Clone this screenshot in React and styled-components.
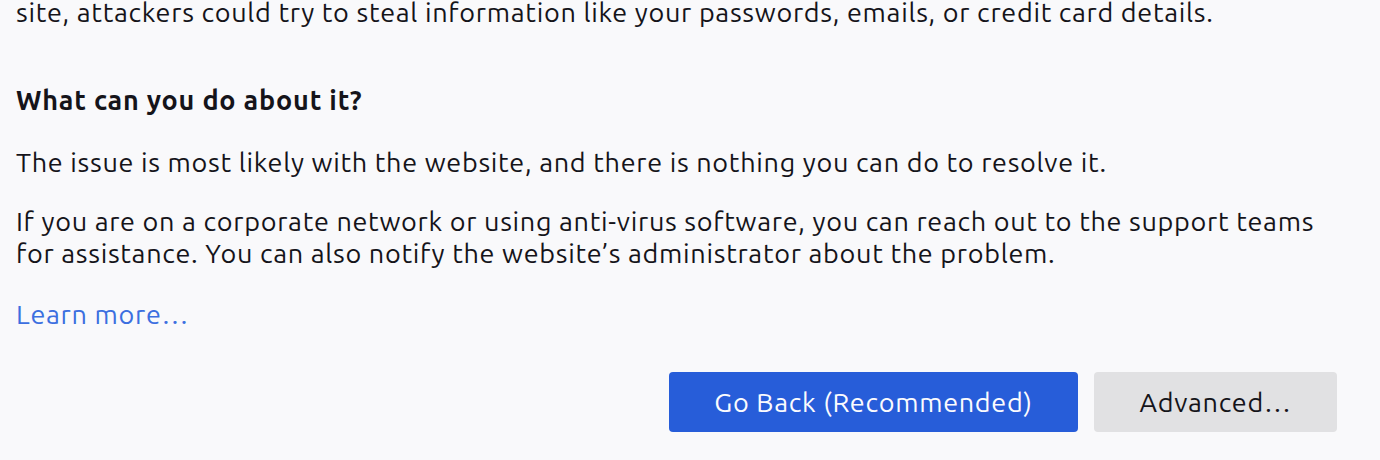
import styled, { createGlobalStyle } from 'styled-components';

const GlobalStyle = createGlobalStyle`
  html, body {
    margin: 0;
    padding: 0;
    background: #f9f9fb;
  }
  body {
    font-family: "Ubuntu", "Noto Sans", "Open Sans", sans-serif;
    color: #15141a;
  }
`;

const Page = styled.main`
  width: 1321px;
  padding: 0 0 0 16px;
  margin-top: -4px;
  font-size: 27px;
  line-height: 32px;
  letter-spacing: 0.7px;
`;

const Para = styled.p`
  margin: 0 0 ${({ $gap }) => $gap || 29}px;
`;

const Heading = styled.h2`
  margin: 0 0 30px;
  font-size: 27px;
  line-height: 32px;
  font-weight: 700;
  letter-spacing: 0.8px;
`;

const LearnMore = styled.a`
  display: inline-block;
  color: #3c6fe0;
  text-decoration: none;
  cursor: pointer;
`;

const ButtonRow = styled.div`
  display: flex;
  justify-content: flex-end;
  gap: 16px;
  margin-top: 42px;
`;

const Button = styled.button`
  height: 60px;
  width: ${({ $w }) => $w}px;
  border: none;
  border-radius: 4px;
  font-family: inherit;
  font-size: 27px;
  letter-spacing: 0.7px;
  background: ${({ $primary }) => ($primary ? '#275dd9' : '#e1e1e3')};
  color: ${({ $primary }) => ($primary ? '#fbfbfe' : '#15141a')};
  cursor: pointer;
`;

export default function App() {
  return (
    <>
      <GlobalStyle />
      <Page>
        <Para $gap={56}>
          site, attackers could try to steal information like your passwords, emails, or credit card details.
        </Para>
        <Heading>What can you do about it?</Heading>
        <Para $gap={27}>The issue is most likely with the website, and there is nothing you can do to resolve it.</Para>
        <Para>
          If you are on a corporate network or using anti-virus software, you can reach out to the support teams
          for assistance. You can also notify the website’s administrator about the problem.
        </Para>
        <LearnMore>Learn more…</LearnMore>
        <ButtonRow>
          <Button $primary $w={409}>Go Back (Recommended)</Button>
          <Button $w={243}>Advanced…</Button>
        </ButtonRow>
      </Page>
    </>
  );
}
